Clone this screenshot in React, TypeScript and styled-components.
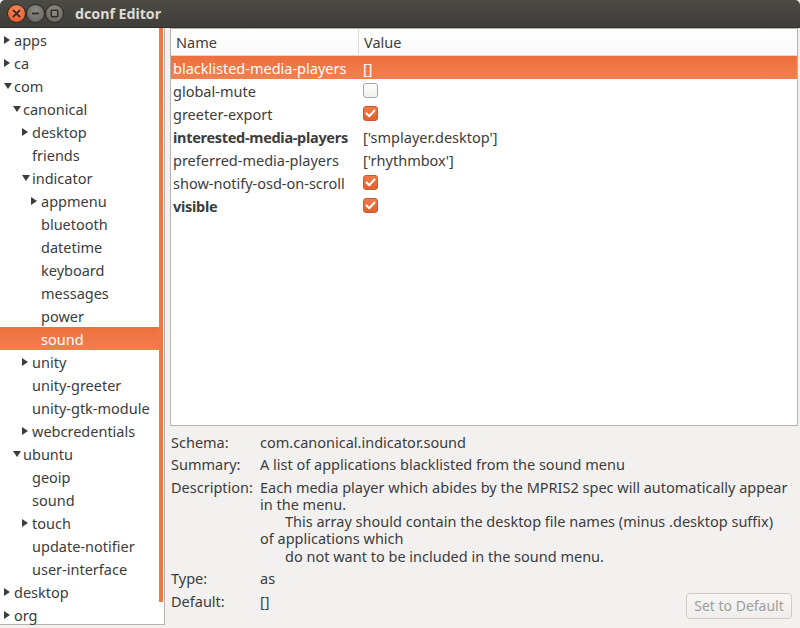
import React from "react";
import styled, { createGlobalStyle } from "styled-components";

const Global = createGlobalStyle`
  html, body { margin: 0; padding: 0; background: #f2f1f0; }
  body { font-family: "Noto Sans", "DejaVu Sans", sans-serif; }
  * { box-sizing: border-box; }
`;

const Window = styled.div`
  width: 800px;
  height: 628px;
  display: flex;
  flex-direction: column;
  background: #f2f1f0;
  overflow: hidden;
  font-family: "Noto Sans", "DejaVu Sans", sans-serif;
  font-size: 14.5px;
  color: #3c3c3c;
`;

const TitleBar = styled.div`
  height: 28px;
  flex: none;
  display: flex;
  align-items: center;
  padding-left: 7px;
  background: linear-gradient(#4b4a45, #3f3e3a);
  border-radius: 5px 5px 0 0;
  border-bottom: 1px solid #2f2e2b;
`;

const WinButtons = styled.div`
  display: flex;
  margin-right: 11px;
`;

const WinButton = styled.div<{ $kind: "close" | "min" | "max" }>`
  width: 19px;
  height: 19px;
  border-radius: 50%;
  display: flex;
  align-items: center;
  justify-content: center;
  border: 1px solid #2a2926;
  background: ${(p) =>
    p.$kind === "close"
      ? "radial-gradient(circle at 50% 35%, #f88a5d, #e0512a)"
      : "radial-gradient(circle at 50% 35%, #8f8d87, #5f5e59)"};
`;

const Title = styled.div`
  color: #dfdbd2;
  font-weight: 700;
  font-size: 14.2px;
`;

const Body = styled.div`
  flex: 1;
  display: flex;
  min-height: 0;
`;

const TreePane = styled.div`
  width: 165px;
  flex: none;
  margin-bottom: 3px;
  display: flex;
  background: #ffffff;
  border: 1px solid #b6b3ae;
  border-left: none;
  border-top: none;
`;

const TreeList = styled.div`
  flex: 1;
  min-width: 0;
`;

const TreeRow = styled.div<{ $depth: number; $selected?: boolean }>`
  height: 23px;
  display: flex;
  align-items: center;
  padding-left: ${(p) => 3 + p.$depth * 9}px;
  white-space: nowrap;
  color: ${(p) => (p.$selected ? "#ffffff" : "#3c3c3c")};
  background: ${(p) =>
    p.$selected ? "linear-gradient(#ee6f3e, #f2804f)" : "transparent"};
  margin-right: ${(p) => (p.$selected ? "-4px" : "0")};
`;

const ArrowBox = styled.span`
  width: 11px;
  flex: none;
  display: flex;
  align-items: center;
`;

const ScrollTrack = styled.div`
  width: 5px;
  flex: none;
  padding-right: 1px;
  display: flex;
  flex-direction: column;
`;

const ScrollThumb = styled.div`
  width: 4px;
  height: 574px;
  background: #f07746;
`;

const RightPanel = styled.div`
  flex: 1;
  display: flex;
  flex-direction: column;
  padding: 0 2px 0 5px;
  min-width: 0;
`;

const TableFrame = styled.div`
  height: 398px;
  flex: none;
  background: #ffffff;
  border: 1px solid #b6b3ae;
  display: flex;
  flex-direction: column;
`;

const HeaderRow = styled.div`
  height: 27px;
  display: grid;
  grid-template-columns: 188px 1fr;
  border-bottom: 1px solid #dcdad5;
  background: linear-gradient(#ffffff, #fafafa);
`;

const HeaderCell = styled.div<{ $sep?: boolean }>`
  display: flex;
  align-items: center;
  padding-left: 5px;
  color: #3c3c3c;
  border-right: ${(p) => (p.$sep ? "1px solid #dcdad5" : "none")};
`;

const KeyRow = styled.div<{ $selected?: boolean }>`
  height: 23px;
  display: grid;
  grid-template-columns: 188px 1fr;
  align-items: center;
  color: ${(p) => (p.$selected ? "#ffffff" : "#3c3c3c")};
  background: ${(p) =>
    p.$selected ? "linear-gradient(#ee6f3e, #f2804f)" : "transparent"};
`;

const NameCell = styled.div<{ $bold?: boolean }>`
  padding-left: 2px;
  white-space: nowrap;
  font-weight: ${(p) => (p.$bold ? 700 : 400)};
  letter-spacing: ${(p) => (p.$bold ? "-0.3px" : "0")};
`;

const ValueCell = styled.div`
  padding-left: 4px;
  white-space: nowrap;
  display: flex;
  align-items: center;
`;

const CheckBox = styled.span<{ $checked?: boolean }>`
  width: 15px;
  height: 15px;
  border-radius: 3px;
  display: inline-flex;
  align-items: center;
  justify-content: center;
  border: 1px solid ${(p) => (p.$checked ? "#c65a2c" : "#a9a6a1")};
  background: ${(p) =>
    p.$checked ? "linear-gradient(#f07a48, #e0622f)" : "linear-gradient(#ffffff, #f1f0ee)"};
`;

const Details = styled.div`
  display: grid;
  grid-template-columns: 89px 1fr;
  padding-top: 7.5px;
  padding-left: 1px;
  row-gap: 5.5px;
  line-height: 17px;
`;

const Label = styled.div`
  color: #3c3c3c;
  white-space: nowrap;
`;

const Value = styled.div`
  color: #3c3c3c;
  white-space: nowrap;
`;

const DescBlock = styled.div`
  color: #3c3c3c;
  line-height: 17.25px;
`;

const DescLine = styled.div<{ $indent?: boolean }>`
  padding-left: ${(p) => (p.$indent ? "25px" : "0")};
  white-space: nowrap;
`;

const Footer = styled.div`
  display: flex;
  justify-content: flex-end;
  margin-top: -17px;
  padding-right: 6px;
`;

const DefaultButton = styled.button`
  width: 106px;
  height: 26px;
  font-family: inherit;
  font-size: 14px;
  color: #a09e99;
  background: linear-gradient(#f7f6f5, #efeeec);
  border: 1px solid #cfccc7;
  border-radius: 4px;
  padding: 0;
`;

const Arrow = ({ dir, color }: { dir: "right" | "down"; color: string }) =>
  dir === "right" ? (
    <svg width="8" height="10" viewBox="0 0 8 10">
      <path d="M1 1 L7 5 L1 9 Z" fill={color} />
    </svg>
  ) : (
    <svg width="10" height="8" viewBox="0 0 10 8">
      <path d="M1 1 L9 1 L5 7 Z" fill={color} />
    </svg>
  );

type Node = { label: string; depth: number; arrow?: "right" | "down"; selected?: boolean };

const tree: Node[] = [
  { label: "apps", depth: 0, arrow: "right" },
  { label: "ca", depth: 0, arrow: "right" },
  { label: "com", depth: 0, arrow: "down" },
  { label: "canonical", depth: 1, arrow: "down" },
  { label: "desktop", depth: 2, arrow: "right" },
  { label: "friends", depth: 2 },
  { label: "indicator", depth: 2, arrow: "down" },
  { label: "appmenu", depth: 3, arrow: "right" },
  { label: "bluetooth", depth: 3 },
  { label: "datetime", depth: 3 },
  { label: "keyboard", depth: 3 },
  { label: "messages", depth: 3 },
  { label: "power", depth: 3 },
  { label: "sound", depth: 3, selected: true },
  { label: "unity", depth: 2, arrow: "right" },
  { label: "unity-greeter", depth: 2 },
  { label: "unity-gtk-module", depth: 2 },
  { label: "webcredentials", depth: 2, arrow: "right" },
  { label: "ubuntu", depth: 1, arrow: "down" },
  { label: "geoip", depth: 2 },
  { label: "sound", depth: 2 },
  { label: "touch", depth: 2, arrow: "right" },
  { label: "update-notifier", depth: 2 },
  { label: "user-interface", depth: 2 },
  { label: "desktop", depth: 0, arrow: "right" },
  { label: "org", depth: 0, arrow: "right" },
];

type Key = {
  name: string;
  bold?: boolean;
  selected?: boolean;
  text?: string;
  check?: boolean;
};

const keys: Key[] = [
  { name: "blacklisted-media-players", text: "[]", selected: true },
  { name: "global-mute", check: false },
  { name: "greeter-export", check: true },
  { name: "interested-media-players", text: "['smplayer.desktop']", bold: true },
  { name: "preferred-media-players", text: "['rhythmbox']" },
  { name: "show-notify-osd-on-scroll", check: true },
  { name: "visible", check: true, bold: true },
];

const Check = () => (
  <svg width="11" height="9" viewBox="0 0 11 9">
    <path d="M1.5 4.5 L4.2 7.2 L9.5 1.5" stroke="#ffffff" strokeWidth="2" fill="none" strokeLinecap="round" strokeLinejoin="round" />
  </svg>
);

export default function App() {
  return (
    <>
      <Global />
      <Window>
        <TitleBar>
          <WinButtons>
            <WinButton $kind="close">
              <svg width="9" height="9" viewBox="0 0 9 9">
                <path d="M1.5 1.5 L7.5 7.5 M7.5 1.5 L1.5 7.5" stroke="#3a2a22" strokeWidth="1.8" strokeLinecap="round" />
              </svg>
            </WinButton>
            <WinButton $kind="min">
              <svg width="9" height="9" viewBox="0 0 9 9">
                <path d="M1 4.5 L8 4.5" stroke="#2f2e2b" strokeWidth="1.8" />
              </svg>
            </WinButton>
            <WinButton $kind="max">
              <svg width="9" height="9" viewBox="0 0 9 9">
                <rect x="1.2" y="1.2" width="6.6" height="6.6" stroke="#2f2e2b" strokeWidth="1.5" fill="none" rx="1" />
              </svg>
            </WinButton>
          </WinButtons>
          <Title>dconf Editor</Title>
        </TitleBar>
        <Body>
          <TreePane>
            <TreeList>
              {tree.map((n, i) => (
                <TreeRow key={i} $depth={n.depth} $selected={n.selected}>
                  <ArrowBox>
                    {n.arrow && <Arrow dir={n.arrow} color={n.selected ? "#fff" : "#3c3c3c"} />}
                  </ArrowBox>
                  {n.label}
                </TreeRow>
              ))}
            </TreeList>
            <ScrollTrack>
              <ScrollThumb />
            </ScrollTrack>
          </TreePane>
          <RightPanel>
            <TableFrame>
              <HeaderRow>
                <HeaderCell $sep>Name</HeaderCell>
                <HeaderCell>Value</HeaderCell>
              </HeaderRow>
              {keys.map((k) => (
                <KeyRow key={k.name} $selected={k.selected}>
                  <NameCell $bold={k.bold}>{k.name}</NameCell>
                  <ValueCell>
                    {k.text !== undefined ? (
                      k.text
                    ) : (
                      <CheckBox $checked={k.check}>{k.check && <Check />}</CheckBox>
                    )}
                  </ValueCell>
                </KeyRow>
              ))}
            </TableFrame>
            <Details>
              <Label>Schema:</Label>
              <Value>com.canonical.indicator.sound</Value>
              <Label>Summary:</Label>
              <Value>A list of applications blacklisted from the sound menu</Value>
              <Label>Description:</Label>
              <DescBlock>
                <DescLine>Each media player which abides by the MPRIS2 spec will automatically appear</DescLine>
                <DescLine>in the menu.</DescLine>
                <DescLine $indent>This array should contain the desktop file names (minus .desktop suffix)</DescLine>
                <DescLine>of applications which</DescLine>
                <DescLine $indent>do not want to be included in the sound menu.</DescLine>
              </DescBlock>
              <Label>Type:</Label>
              <Value>as</Value>
              <Label>Default:</Label>
              <Value>[]</Value>
            </Details>
            <Footer>
              <DefaultButton disabled>Set to Default</DefaultButton>
            </Footer>
          </RightPanel>
        </Body>
      </Window>
    </>
  );
}
